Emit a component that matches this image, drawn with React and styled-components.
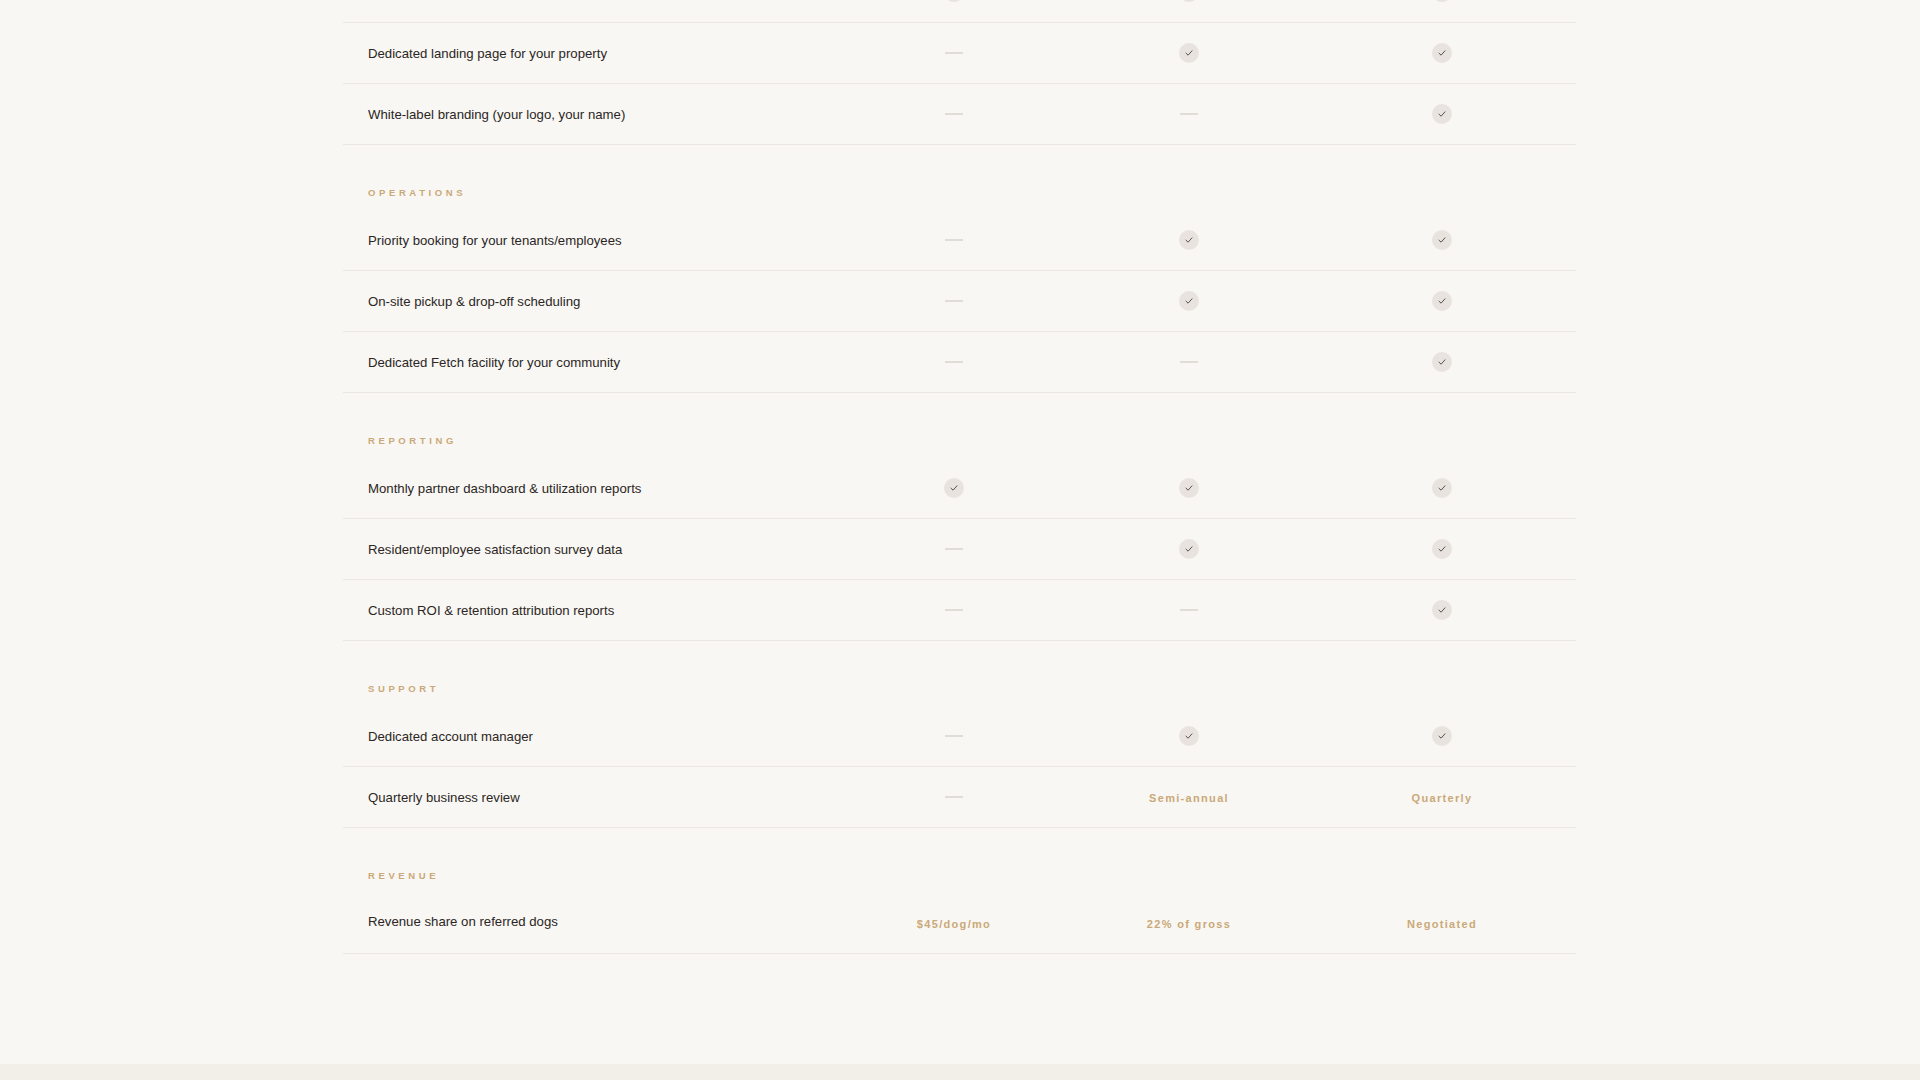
import React from "react";
import styled, { createGlobalStyle } from "styled-components";

const Global = createGlobalStyle`
  html, body { margin: 0; padding: 0; background: #f9f7f3; }
  body { font-family: "Liberation Sans", Arial, sans-serif; overflow: hidden; }
`;

const Page = styled.div`
  height: 1064px;
  overflow: hidden;
  background: #f9f7f3;
`;

const Table = styled.div`
  width: 1233px;
  margin: -38px 0 0 343px;
`;

const Row = styled.div`
  display: grid;
  grid-template-columns: 495px 232px 238px 1fr;
  align-items: center;
  height: 60px;
  border-bottom: 1.5px solid #ebe7e1;
`;

const Label = styled.div`
  padding-left: 25px;
  font-size: 13.2px;
  color: #2a2624;
  margin-top: ${({ $up }) => ($up ? "-4px" : "0")};
`;

const Cell = styled.div`
  display: flex;
  justify-content: center;
  align-items: center;
`;

const Section = styled.div`
  height: 65px;
  padding-left: 25px;
  box-sizing: border-box;
  padding-top: 42px;
  font-size: 9.5px;
  font-weight: 700;
  letter-spacing: 0.38em;
  color: #c9a979;
`;

const Check = styled.span`
  width: 20px;
  height: 20px;
  border-radius: 50%;
  background: #e9e3e0;
  display: flex;
  align-items: center;
  justify-content: center;
`;

const Dash = styled.span`
  width: 18px;
  height: 1.5px;
  background: #e0dcd6;
`;

const Value = styled.span`
  font-size: 11px;
  font-weight: 700;
  letter-spacing: 0.12em;
  color: #c9a979;
  margin-top: 2px;
`;

const Footer = styled.div`
  position: absolute;
  left: 0;
  right: 0;
  top: 1064px;
  height: 16px;
  background: #f2efe8;
`;

const CheckIcon = () => (
  <Check>
    <svg width="10" height="10" viewBox="0 0 10 10">
      <path d="M2 5.2 L4.1 7.2 L8 2.8" fill="none" stroke="#5a5350" strokeWidth="1" strokeLinecap="round" strokeLinejoin="round" />
    </svg>
  </Check>
);

const render = (v) =>
  v === true ? <CheckIcon /> : v === false ? <Dash /> : <Value>{v}</Value>;

const data = [
  { rows: [
    ["Co-branded marketing materials", true, true, true],
    ["Dedicated landing page for your property", false, true, true],
    ["White-label branding (your logo, your name)", false, false, true],
  ] },
  { title: "OPERATIONS", rows: [
    ["Priority booking for your tenants/employees", false, true, true],
    ["On-site pickup & drop-off scheduling", false, true, true],
    ["Dedicated Fetch facility for your community", false, false, true],
  ] },
  { title: "REPORTING", rows: [
    ["Monthly partner dashboard & utilization reports", true, true, true],
    ["Resident/employee satisfaction survey data", false, true, true],
    ["Custom ROI & retention attribution reports", false, false, true],
  ] },
  { title: "SUPPORT", rows: [
    ["Dedicated account manager", false, true, true],
    ["Quarterly business review", false, "Semi-annual", "Quarterly"],
  ] },
  { title: "REVENUE", up: true, rows: [
    ["Revenue share on referred dogs", "$45/dog/mo", "22% of gross", "Negotiated"],
  ] },
];

export default function App() {
  return (
    <Page>
      <Global />
      <Table>
        {data.map((s, i) => (
          <React.Fragment key={i}>
            {s.title && <Section>{s.title}</Section>}
            {s.rows.map((r) => (
              <Row key={r[0]}>
                <Label $up={s.up}>{r[0]}</Label>
                <Cell>{render(r[1])}</Cell>
                <Cell>{render(r[2])}</Cell>
                <Cell>{render(r[3])}</Cell>
              </Row>
            ))}
          </React.Fragment>
        ))}
      </Table>
      <Footer />
    </Page>
  );
}
